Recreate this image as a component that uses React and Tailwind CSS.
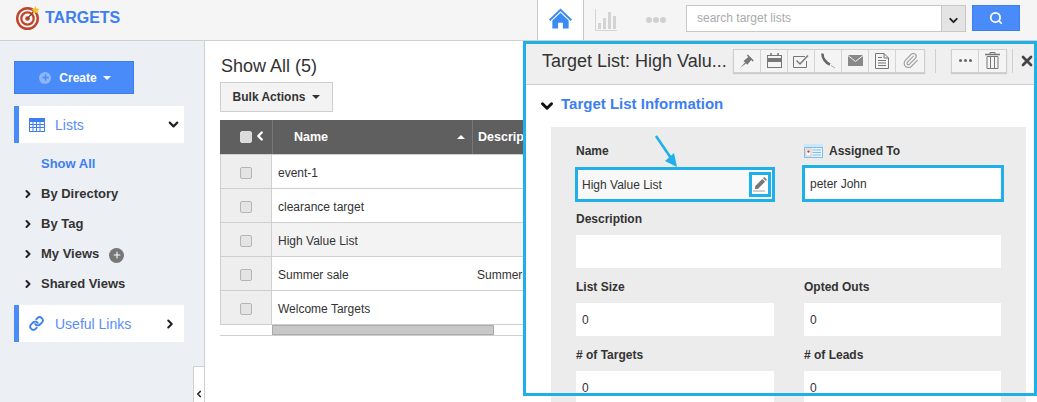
import { ChevronDown, ChevronLeft, ChevronRight, Search, Plus, X, Link, Paperclip } from "lucide-react";

const rows = [
  { name: "event-1", desc: "" },
  { name: "clearance target", desc: "" },
  { name: "High Value List", desc: "", shaded: true },
  { name: "Summer sale", desc: "Summer" },
  { name: "Welcome Targets", desc: "" },
];

const navItems = ["By Directory", "By Tag", "My Views", "Shared Views"];

const Caret = ({ className }) => (
  <span className={`inline-block border-x-[4px] border-t-[4px] border-x-transparent ${className}`} />
);

const Target = () => (
  <svg width="26" height="26" viewBox="0 0 26 26" className="shrink-0">
    <circle cx="12.5" cy="13.5" r="10.3" fill="none" stroke="#c0432b" strokeWidth="2.4" />
    <circle cx="12.5" cy="13.5" r="6.2" fill="none" stroke="#c0432b" strokeWidth="2.2" />
    <circle cx="12.5" cy="13.5" r="2.3" fill="#c0432b" />
    <path d="M12.5 13.5 L19 6" stroke="#7a4a2a" strokeWidth="1.2" />
    <path d="M20.5 1 l1.2 2.6 2.8.4-2 2 .5 2.8-2.5-1.3-2.5 1.3.5-2.8-2-2 2.8-.4z" fill="#f2c12e" />
  </svg>
);

const Home = () => (
  <svg width="23" height="22" viewBox="0 0 24 22" fill="#3b8bf5">
    <path d="M12 0 L24 11.5 L22.6 13 L12 3 L1.4 13 L0 11.5 Z" />
    <path d="M3.5 12.5 L12 4.6 L20.5 12.5 V21 H14.5 V15 H9.5 V21 H3.5 Z" />
  </svg>
);

const Bars = () => (
  <svg width="22" height="22" viewBox="0 0 22 22">
    <path d="M0.5 0 V21.5 H22" fill="none" stroke="#d4d4d4" />
    <rect x="3" y="14" width="3" height="6" fill="#d4d4d4" />
    <rect x="8" y="9" width="3" height="11" fill="#d4d4d4" />
    <rect x="13" y="3" width="3" height="17" fill="#d4d4d4" />
    <rect x="18" y="7" width="3" height="13" fill="#d4d4d4" />
  </svg>
);

const GridIcon = () => (
  <svg width="16" height="14" viewBox="0 0 16 14" fill="#3d7ef0">
    <path d="M0 0H16V14H0Z M1 4V6H3.5V4Z M4.5 4V6H7V4Z M8 4V6H10.5V4Z M11.5 4V6H15V4Z M1 7V9H3.5V7Z M4.5 7V9H7V7Z M8 7V9H10.5V7Z M11.5 7V9H15V7Z M1 10V13H3.5V10Z M4.5 10V13H7V10Z M8 10V13H10.5V10Z M11.5 10V13H15V10Z" fillRule="evenodd" />
  </svg>
);

const Card = () => (
  <svg width="19" height="14" viewBox="0 0 19 14" className="mr-1.5">
    <rect width="19" height="14" fill="#cfe6f8" />
    <rect x="0.5" y="3.5" width="18" height="10" fill="#eaf5fd" stroke="#7fbdec" />
    <rect x="2" y="5" width="5" height="7" fill="#fff" stroke="#c9a08c" strokeWidth="0.6" />
    <circle cx="4.5" cy="7.5" r="1.2" fill="#b5533c" />
    <path d="M8.5 6H17 M8.5 8.5H17 M8.5 11H17" stroke="#7fbdec" />
  </svg>
);

// toolbar glyphs, drawn because the icon packs have nothing this close
const PinIcon = () => (
  <svg width="16" height="16" viewBox="0 0 16 16" fill="#777">
    <path d="M1 15 L6 9.5 L7 10.5 Z" />
    <path d="M4.5 8 L10 3.5 L12.8 6.3 L8.3 11.8 Z" />
    <path d="M8.8 1.5 L14.8 7.5 L13.6 8.4 L7.8 2.6 Z" />
  </svg>
);

const CalendarIcon = () => (
  <svg width="15" height="15" viewBox="0 0 15 15">
    <rect x="0.5" y="2.5" width="14" height="12" fill="none" stroke="#777" />
    <rect x="1" y="5" width="13" height="4" fill="#777" />
    <path d="M4 0V3 M11 0V3" stroke="#777" strokeWidth="1.5" />
  </svg>
);

const CheckIcon = () => (
  <svg width="16" height="14" viewBox="0 0 16 14" fill="none" stroke="#777">
    <path d="M13.5 7V13.5H0.5V2.5H12" />
    <path d="M3.5 6.5 L7 10 L15 1.5" strokeWidth="1.4" />
  </svg>
);

const PhoneIcon = () => (
  <svg width="16" height="17" viewBox="0 0 16 17" fill="none">
    <path d="M2.5 1.5 C2 6 6 11 10 12.5" stroke="#666" strokeWidth="2.6" />
    <path d="M11 13.5 L15 16" stroke="#aaa" strokeWidth="1" />
  </svg>
);

const MailIcon = () => (
  <svg width="15" height="11" viewBox="0 0 15 11">
    <rect width="15" height="11" fill="#888" />
    <path d="M0 0.5 L7.5 6.5 L15 0.5" fill="none" stroke="#f4f4f4" />
  </svg>
);

const DocIcon = () => (
  <svg width="14" height="16" viewBox="0 0 14 16" fill="none" stroke="#777">
    <path d="M0.5 0.5H9L13.5 5V15.5H0.5Z" />
    <path d="M9 0.5V5H13.5" />
    <path d="M3 4.5H7 M3 7.5H11 M3 10H11 M3 12.5H11" />
  </svg>
);

const TrashIcon = () => (
  <svg width="15" height="17" viewBox="0 0 15 17" fill="none" stroke="#777">
    <path d="M0 2.5H15" strokeWidth="1.5" />
    <path d="M5 2V0.5H10V2" />
    <path d="M2 4.5H13V16.5H2Z M5.5 5V16 M9.5 5V16" />
  </svg>
);

const toolIcons = [
  <PinIcon />,
  <CalendarIcon />,
  <CheckIcon />,
  <PhoneIcon />,
  <MailIcon />,
  <DocIcon />,
  <Paperclip size={17} strokeWidth={1.5} className="text-[#999]" />,
];

const EditIcon = () => (
  <svg width="14" height="15" viewBox="0 0 15 16" fill="#777">
    <path d="M2.5 9.5 L10 2 L13 5 L5.5 12.5 L2 13 Z" />
    <path d="M10.8 1.2 L12 0 L15 3 L13.8 4.2 Z" />
    <rect x="0" y="14.5" width="13" height="1" fill="#999" />
  </svg>
);

const Checkbox = ({ className = "border-[#b5b5b5] bg-[#e4e4e4]" }) => (
  <span className={`block size-3 rounded-[2px] border ${className}`} />
);

const Field = ({ label, className = "w-[198px]", value, children, icon }) => (
  <div className={className}>
    <div className="flex h-[14px] items-center text-xs font-bold text-[#333]">
      {icon}
      {label}
    </div>
    {children || (
      <div className="mt-[9px] flex h-[33px] items-center bg-white px-[6px] text-xs text-[#333]">{value}</div>
    )}
  </div>
);

export default function App() {
  return (
    <div className="relative h-[402px] w-[1037px] overflow-hidden bg-white font-['Liberation_Sans',Arial,sans-serif] text-[#333]">
      {/* top bar */}
      <header className="flex h-[41px] items-center border-b border-[#cfcfcf] bg-[#f5f5f5]">
        <div className="flex w-[537px] items-center gap-[4px] pb-[5px] pl-[15px]">
          <Target />
          <span className="text-base font-bold text-[#3d7ef0]">TARGETS</span>
        </div>
        <div className="flex h-10 w-[47px] items-center justify-center border-x border-[#c8c8c8] bg-white pb-[2px]">
          <Home />
        </div>
        <div className="ml-[11px] flex w-[80px] items-center gap-[29px]">
          <Bars />
          <span className="flex gap-[1px]">
            <span className="size-[6px] rounded-full bg-[#d0d0d0]" />
            <span className="size-[6px] rounded-full bg-[#d0d0d0]" />
            <span className="size-[6px] rounded-full bg-[#d0d0d0]" />
          </span>
        </div>
        <div className="mb-[3px] ml-[11px] flex h-[27px] w-[280px] border border-[#c8c8c8] bg-white">
          <span className="flex-1 pl-[10px] text-xs leading-[24px] text-[#aaa]">search target lists</span>
          <span className="flex w-[24px] items-center justify-center border-l border-[#c8c8c8] bg-[#e4e4e4]">
            <ChevronDown size={13} strokeWidth={3.5} className="mt-[3px] text-[#222]" />
          </span>
        </div>
        <button className="mb-[4px] ml-[6px] flex h-[26px] w-[48px] items-center justify-center border border-[#3d7ef0] bg-[#4a8bfa] text-white">
          <Search size={14} strokeWidth={3} />
        </button>
      </header>

      <div className="flex h-[361px]">
        {/* sidebar */}
        <aside className="relative w-[205px] shrink-0 border-r border-[#cfcfcf] bg-[#eceff4] pl-[14px] pt-[20px]">
          <button className="flex h-[33px] w-[120px] items-center justify-center border border-[#3d7ef0] bg-[#4a8bfa] pl-[2px] text-xs font-bold text-white">
            <span className="mr-[8px] flex size-3 items-center justify-center rounded-full bg-[#8db5f8]">
              <Plus size={9} strokeWidth={4} className="text-[#4a8bfa]" />
            </span>
            Create
            <Caret className="ml-[6px] border-t-white" />
          </button>

          <div className="mt-[12px] flex h-[37px] w-[170px] items-center border-l-[5px] border-[#4a8bfa] bg-white pl-[10px] pr-[3px] text-sm text-[#5a8df5]">
            <GridIcon />
            <span className="ml-[10px] flex-1">Lists</span>
            <ChevronDown size={15} strokeWidth={3.5} className="text-[#222]" />
          </div>

          <div className="mt-[6px] pl-[27px] text-[13px] font-bold leading-[30px] text-[#3d7ef0]">Show All</div>
          {navItems.map((item) => (
            <div key={item} className="flex h-[30px] items-center text-[13px] font-bold">
              <ChevronRight size={12} strokeWidth={4} className="ml-[8px] mr-[7px] text-[#222]" />
              {item}
              {item === "My Views" && (
                <span className="ml-[10px] mt-[2px] flex size-[15px] items-center justify-center rounded-full bg-[#777]">
                  <Plus size={10} strokeWidth={2.5} className="text-white" />
                </span>
              )}
            </div>
          ))}

          <div className="mt-[6px] flex h-[37px] w-[170px] items-center border-l-[5px] border-[#4a8bfa] bg-white pl-[10px] pr-[7px] text-sm text-[#5a8df5]">
            <Link size={15} strokeWidth={3} className="text-[#3d7ef0]" />
            <span className="ml-[11px] flex-1">Useful Links</span>
            <ChevronRight size={14} strokeWidth={3.5} className="text-[#222]" />
          </div>

          <span className="absolute bottom-0 right-0 flex h-[36px] w-[11px] items-end justify-center border-l border-t border-[#cfcfcf] bg-white pb-[3px]">
            <ChevronLeft size={10} strokeWidth={4} className="text-[#222]" />
          </span>
        </aside>

        {/* list view */}
        <main className="min-w-0 flex-1 overflow-hidden pl-[15px]">
          <h1 className="ml-px mt-[14px] text-lg font-normal leading-[22px]">Show All (5)</h1>
          <button className="mt-[5px] flex h-[30px] w-[113px] items-center justify-center gap-[7px] border border-[#cfcfcf] bg-[#f3f3f3] text-xs font-bold">
            Bulk Actions
            <Caret className="border-t-[#333]" />
          </button>

          <div className="mt-[8px] w-[560px]">
            <div className="flex h-[35px] items-center border-b border-[#cfcfcf] bg-[#5f5f5f] text-[12.5px] font-bold text-white">
              <div className="flex w-[52px] items-center pl-[20px]">
                <Checkbox className="border-[#ddd] bg-[#dcdcdc]" />
                <ChevronLeft size={14} strokeWidth={4} className="-mt-[3px] ml-[1px]" />
              </div>
              <div className="flex h-full w-[200px] items-center justify-between border-l border-[#777] pl-[21px] pr-[7px]">
                Name
                <span className="inline-block border-x-[4px] border-b-[4px] border-x-transparent border-b-white" />
              </div>
              <div className="flex h-full flex-1 items-center border-l border-[#777] pl-[5px]">Description</div>
            </div>
            {rows.map((row) => (
              <div key={row.name} className={`flex h-[34px] items-center border-b border-[#cfcfcf] text-xs ${row.shaded ? "bg-[#f3f3f3]" : "bg-white"}`}>
                <div className="flex h-full w-[52px] items-center justify-center border-x border-[#cfcfcf] bg-[#eeeeee] pt-[2px]">
                  <Checkbox />
                </div>
                <div className="w-[200px] pl-[6px] pt-[2px]">{row.name}</div>
                <div className="pl-[5px] pt-[2px]">{row.desc}</div>
              </div>
            ))}
            <div className="h-[11px] border-b border-[#cfcfcf] pl-[52px]">
              <div className="h-full w-[222px] border border-[#aaa] bg-[#c8c8c8]" />
            </div>
          </div>
        </main>
      </div>

      {/* detail panel sliding over the list */}
      <section className="absolute left-[523px] top-[41px] h-[361px] w-[514px] bg-white">
        <div className="flex h-[44px] items-center border-b border-[#cfcfcf] bg-[#efefef] pb-[4px] pl-[19px]">
          <span className="w-[191px] text-lg leading-none">Target List: High Valu...</span>
          <div className="flex h-[24px] border border-[#cfcfcf] bg-[#f4f4f4] shadow-[0_1px_1px_rgba(0,0,0,0.15)]">
            {toolIcons.map((icon, i) => (
              <span key={i} className="flex w-[27px] items-center justify-center border-r border-[#d4d4d4] last:w-[28px] last:border-r-0">
                {icon}
              </span>
            ))}
          </div>
          <span className="ml-[10px] h-[24px] w-px bg-[#cfcfcf]" />
          <div className="ml-[15px] flex h-[24px] border border-[#cfcfcf] bg-[#f4f4f4] shadow-[0_1px_1px_rgba(0,0,0,0.15)]">
            <span className="flex w-[27px] items-center justify-center gap-[2px] border-r border-[#d4d4d4]">
              <span className="size-[3px] rounded-full bg-[#666]" />
              <span className="size-[3px] rounded-full bg-[#666]" />
              <span className="size-[3px] rounded-full bg-[#666]" />
            </span>
            <span className="flex w-[27px] items-center justify-center">
              <TrashIcon />
            </span>
          </div>
          <span className="ml-[5px] h-[24px] w-px bg-[#cfcfcf]" />
          <X size={16} strokeWidth={4} className="ml-[6px] text-[#444]" />
        </div>

        <div className="flex h-[42px] items-center pb-[4px] pl-[15px] text-[15px] font-bold text-[#3d7ef0]">
          <ChevronDown size={18} strokeWidth={4} className="mr-[5px] mt-[3px] text-[#111]" />
          Target List Information
        </div>

        <div className="ml-[28px] h-[275px] w-[475px] overflow-hidden bg-[#ececec] px-[25px] pt-[17px]">
          <div className="flex gap-[30px]">
            <Field label="Name">
              <div className="-ml-px mt-[9px] flex h-[35px] w-[200px] items-center justify-between border-[3px] border-[#1fb0ea] bg-[#f8f8f8] pl-[4px] pr-[1px] text-xs">
                High Value List
                <span className="flex h-[25px] w-[22px] items-center justify-center border-[3px] border-[#1fb0ea] bg-white">
                  <EditIcon />
                </span>
              </div>
            </Field>
            <Field label="Assigned To" className="w-[197px]" icon={<Card />}>
              <div className="-ml-[2px] mt-[7px] flex h-[37px] w-[202px] items-center border-[3px] border-[#1fb0ea] bg-white pl-[5px] text-xs">
                peter John
              </div>
            </Field>
          </div>

          <div className="mt-[10px]">
            <Field label="Description" className="w-[425px]">
              <div className="mt-[9px] h-[33px] bg-white" />
            </Field>
          </div>

          <div className="mt-[12px] flex gap-[30px]">
            <Field label="List Size" value="0" />
            <Field label="Opted Outs" className="w-[197px]" value="0" />
          </div>
          <div className="mt-[12px] flex gap-[30px]">
            <Field label="# of Targets" value="0" />
            <Field label="# of Leads" className="w-[197px]" value="0" />
          </div>
        </div>
      </section>

      {/* annotation frame and arrow */}
      <div className="pointer-events-none absolute left-[523px] top-[41px] h-[355px] w-[514px] border-[3px] border-[#1fb0ea]" />
      <svg width="28" height="36" viewBox="0 0 28 36" className="absolute left-[652px] top-[132px]">
        <path d="M4 4 L23 32" fill="none" stroke="#1fb0ea" strokeWidth="2.6" />
        <path d="M25 35 L13 29 L22 21 Z" fill="#1fb0ea" />
      </svg>
    </div>
  );
}
